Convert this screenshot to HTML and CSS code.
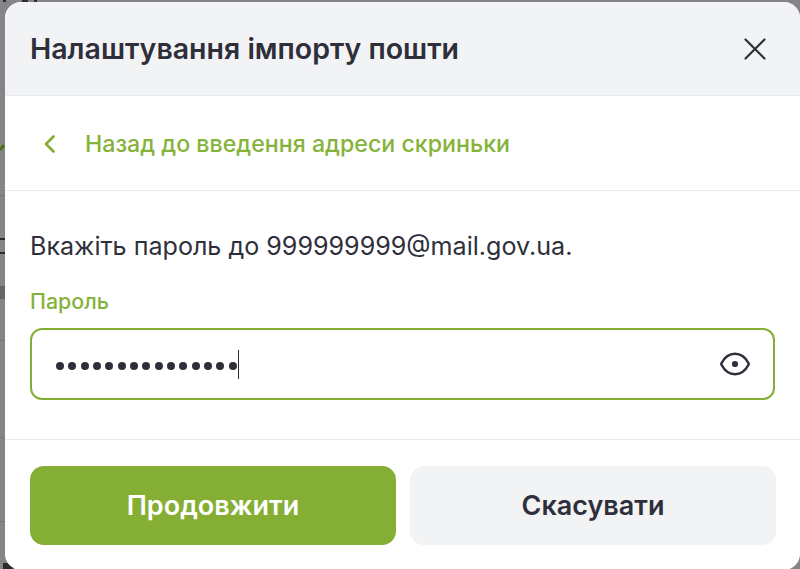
FILE: index.html
```html
<!DOCTYPE html>
<html lang="uk">
<head>
    <meta charset="UTF-8">
    <meta name="viewport" content="width=device-width, initial-scale=1.0">
    <title>Налаштування імпорту пошти</title>
    <link rel="stylesheet" href="styles.css">
</head>
<body>
    <!-- сторінка під модальним вікном, видно лише край -->
    <div class="backdrop">
        <span class="mark mark-top"></span>
        <span class="mark mark-top-2"></span>
        <span class="mark mark-top-3"></span>
        <span class="mark mark-green"></span>
        <span class="mark mark-dark"></span>
        <span class="mark mark-dark-2"></span>
        <span class="mark mark-grey"></span>
        <span class="mark mark-line line-1"></span>
        <span class="mark mark-line line-2"></span>
        <span class="mark mark-line line-3"></span>
        <span class="mark mark-line line-4"></span>
        <span class="mark mark-corner"></span>
    </div>

    <div class="modal">
        <div class="modal-header">
            <h1>Налаштування імпорту пошти</h1>
            <button class="close-btn" aria-label="Закрити">
                <svg width="24" height="24" viewBox="0 0 24 24" fill="none" stroke="#2f2f3b" stroke-width="2.2" stroke-linecap="round">
                    <path d="M2.5 2.5L21.5 21.5M21.5 2.5L2.5 21.5"/>
                </svg>
            </button>
        </div>

        <a class="back-link" href="#">
            <svg width="14" height="20" viewBox="0 0 14 20" fill="none" stroke="#84af34" stroke-width="2.8" stroke-linecap="round" stroke-linejoin="round">
                <path d="M10.5 2.5L3 10L10.5 17.5"/>
            </svg>
            <span>Назад до введення адреси скриньки</span>
        </a>

        <div class="modal-body">
            <p class="hint">Вкажіть пароль до 999999999@mail.gov.ua.</p>
            <label class="field-label" for="password">Пароль</label>
            <div class="password-field">
                <div class="dots" id="password">
                    <i></i><i></i><i></i><i></i><i></i><i></i><i></i><i></i><i></i><i></i><i></i><i></i><i></i><i></i><i></i>
                    <span class="caret"></span>
                </div>
                <svg width="32" height="32" viewBox="0 0 32 32" fill="none" stroke="#2f2f3b" stroke-width="2.5" stroke-linejoin="round">
                    <path d="M2.5 15.2C2.2 15.7 2.2 16.3 2.5 16.8C5.5 22.6 10.2 26.2 16 26.2C21.8 26.2 26.5 22.6 29.5 16.8C29.8 16.3 29.8 15.7 29.5 15.2C26.5 9.4 21.8 5.8 16 5.8C10.2 5.8 5.5 9.4 2.5 15.2Z"/>
                    <circle cx="16" cy="16" r="3.1" fill="#2f2f3b" stroke="none"/>
                </svg>
            </div>
        </div>

        <div class="modal-footer">
            <button class="btn btn-primary">Продовжити</button>
            <button class="btn btn-secondary">Скасувати</button>
        </div>
    </div>
</body>
</html>
```

FILE: styles.css
```css
* {
    margin: 0;
    padding: 0;
    box-sizing: border-box;
}

html, body {
    height: 100%;
    overflow: hidden;
}

body {
    position: relative;
    font-family: Inter, "Noto Sans", sans-serif;
    background-color: #858587;
    color: #2f2f3b;
    padding: 2px 0 0 4.5px;
}

.backdrop {
    position: absolute;
    top: 0;
    left: 0;
    width: 60px;
    height: 100%;
    overflow: hidden;
}

.mark {
    position: absolute;
    left: 0;
    width: 6px;
    height: 2px;
    background-color: #2b2b30;
}

.mark-top {
    left: 3px;
    width: 3px;
}

.mark-top-2 {
    left: 22px;
    width: 6px;
}

.mark-top-3 {
    left: 34px;
    width: 3px;
}

.mark-green {
    top: 146px;
    left: -1px;
    height: 3px;
    background-color: #4f7014;
    transform: rotate(-50deg);
}

.mark-dark {
    top: 238px;
}

.mark-dark-2 {
    top: 252px;
}

.mark-grey {
    top: 286px;
    height: 13px;
    background-color: #66666a;
}

.mark-line {
    height: 1px;
    background-color: #77777a;
}

.line-1 { top: 195px; }
.line-2 { top: 340px; }
.line-3 { top: 437px; }
.line-4 { top: 521px; }

.mark-corner {
    top: 563px;
    left: 3px;
    width: 10px;
    height: 6px;
}

.modal {
    position: relative;
    background-color: #fff;
    border-radius: 16px;
    height: 568px;
    overflow: hidden;
}

.modal-header {
    display: flex;
    align-items: center;
    justify-content: space-between;
    height: 94px;
    padding: 0 33px 0 25.5px;
    background-color: #f2f3f5;
    border-bottom: 1px solid #e8e9eb;
}

.modal-header h1 {
    font-size: 28.5px;
    font-weight: 600;
}

.close-btn {
    display: flex;
    border: none;
    background: none;
}

.back-link {
    display: flex;
    align-items: center;
    gap: 28px;
    height: 95px;
    padding: 1px 0 0 38.5px;
    border-bottom: 1px solid #e8e9eb;
    color: #85b33a;
    font-size: 23.2px;
    font-weight: 500;
    text-decoration: none;
}

.modal-body {
    height: 249px;
    padding: 40px 25.5px 0;
    border-bottom: 1px solid #e8e9eb;
}

.hint {
    font-size: 25.1px;
    line-height: 30px;
}

.field-label {
    display: block;
    margin-top: 27px;
    font-size: 21.4px;
    line-height: 26px;
    font-weight: 500;
    color: #85b33a;
}

.password-field {
    display: flex;
    align-items: center;
    justify-content: space-between;
    height: 72px;
    margin-top: 14px;
    padding: 0 22px 0 24px;
    border: 2px solid #84af34;
    border-radius: 12px;
}

.dots {
    display: flex;
    align-items: center;
    gap: 4.33px;
}

.dots i {
    width: 8px;
    height: 8px;
    margin-top: 3px;
    border-radius: 50%;
    background-color: #2f2f3b;
}

.caret {
    width: 1.5px;
    height: 29px;
    margin-left: -3px;
    background-color: #2f2f3b;
}

.modal-footer {
    display: grid;
    grid-template-columns: 1fr 1fr;
    gap: 14px;
    padding: 26px 24px 0 25.5px;
}

.btn {
    height: 79px;
    border: none;
    border-radius: 14px;
    font-family: inherit;
    font-size: 27px;
    font-weight: 600;
}

.btn-primary {
    background-color: #84af34;
    color: #fff;
}

.btn-secondary {
    background-color: #f2f3f5;
    color: #2f2f3b;
}
```
